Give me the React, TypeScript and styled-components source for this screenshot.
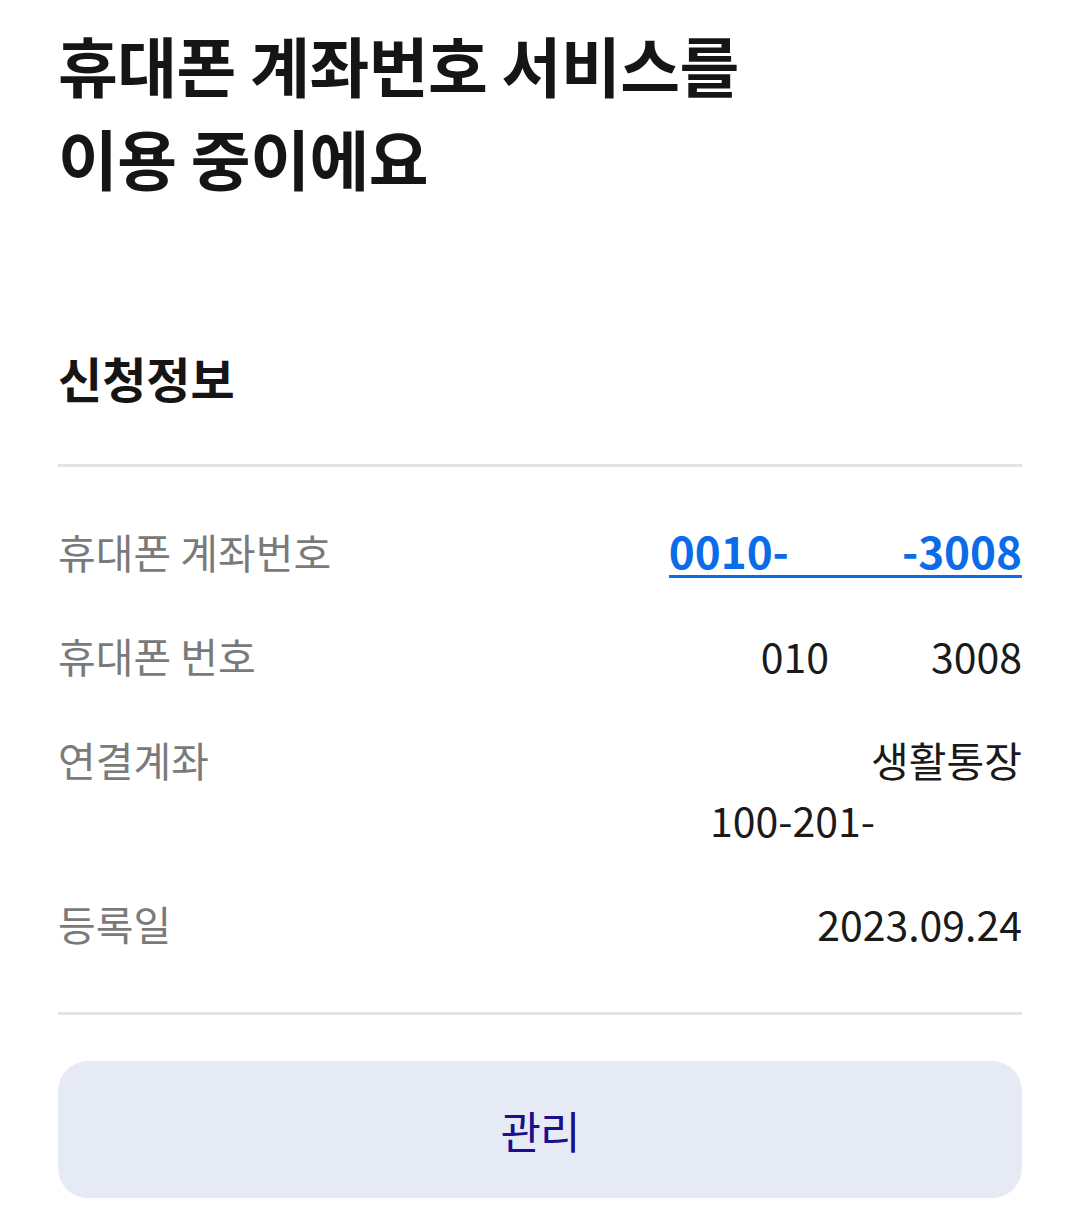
import React from "react";
import styled, { createGlobalStyle } from "styled-components";

const GlobalStyle = createGlobalStyle`
  body {
    margin: 0;
    background: #ffffff;
    font-family: "Noto Sans CJK KR", "Noto Sans", sans-serif;
    color: #111111;
  }
`;

const Page = styled.main`
  display: flex;
  flex-direction: column;
  padding: 18px 58px 0;
`;

const Title = styled.h1`
  margin: 0;
  font-size: 65px;
  line-height: 93px;
  font-weight: 700;
  letter-spacing: -0.5px;
  color: #151515;
`;

const SectionTitle = styled.h2`
  margin: 143px 0 0;
  font-size: 48px;
  line-height: 60px;
  font-weight: 700;
  color: #151515;
`;

const Divider = styled.hr`
  margin: 0;
  border: 0;
  height: 3px;
  background: #e4e4e4;
`;

const InfoList = styled.dl`
  margin: 57px 0 0;
`;

const Rows = styled.div`
  display: flex;
  flex-direction: column;
  gap: 44px;
  padding: 54px 0 59px;
`;

const Row = styled.div`
  display: flex;
  justify-content: space-between;
  align-items: flex-start;
`;

const Label = styled.dt`
  margin: 0;
  font-size: 41px;
  line-height: 60px;
  color: #7a7a7a;
`;

const Value = styled.dd`
  margin: 0;
  display: flex;
  flex-direction: column;
  align-items: flex-end;
  font-size: 41px;
  line-height: 60px;
  color: #1a1a1a;
`;

const Line = styled.span`
  display: inline-flex;
  white-space: pre;
`;

const LinkValue = styled.a`
  display: inline-flex;
  font-weight: 700;
  font-size: 44px;
  line-height: 50px;
  margin-top: 4px;
  color: #0a6ce8;
  border-bottom: 3px solid #0a6ce8;
  text-decoration: none;
  white-space: pre;
`;

// blank space standing in for the masked digits
const Mask = styled.span<{ $w: number }>`
  display: inline-block;
  width: ${(p) => p.$w}px;
`;

const ManageButton = styled.button`
  margin-top: 46px;
  height: 137px;
  border: 0;
  border-radius: 30px;
  background: #e6eaf5;
  color: #1e0e8e;
  font-family: "Noto Sans CJK KR", "Noto Sans", sans-serif;
  font-size: 44px;
  font-weight: 400;
  letter-spacing: -1px;
  cursor: pointer;
`;

export default function App() {
  return (
    <>
      <GlobalStyle />
      <Page>
        <Title>
          휴대폰 계좌번호 서비스를
          <br />
          이용 중이에요
        </Title>
        <SectionTitle>신청정보</SectionTitle>
        <InfoList>
          <Divider />
          <Rows>
            <Row>
              <Label>휴대폰 계좌번호</Label>
              <Value>
                <LinkValue href="#">
                  0010-
                  <Mask $w={113} />
                  -3008
                </LinkValue>
              </Value>
            </Row>
            <Row>
              <Label>휴대폰 번호</Label>
              <Value>
                <Line>
                  010
                  <Mask $w={102} />
                  3008
                </Line>
              </Value>
            </Row>
            <Row>
              <Label>연결계좌</Label>
              <Value>
                <Line>생활통장</Line>
                <Line>
                  100-201-
                  <Mask $w={147} />
                </Line>
              </Value>
            </Row>
            <Row>
              <Label>등록일</Label>
              <Value>
                <Line>2023.09.24</Line>
              </Value>
            </Row>
          </Rows>
          <Divider />
        </InfoList>
        <ManageButton>관리</ManageButton>
      </Page>
    </>
  );
}
